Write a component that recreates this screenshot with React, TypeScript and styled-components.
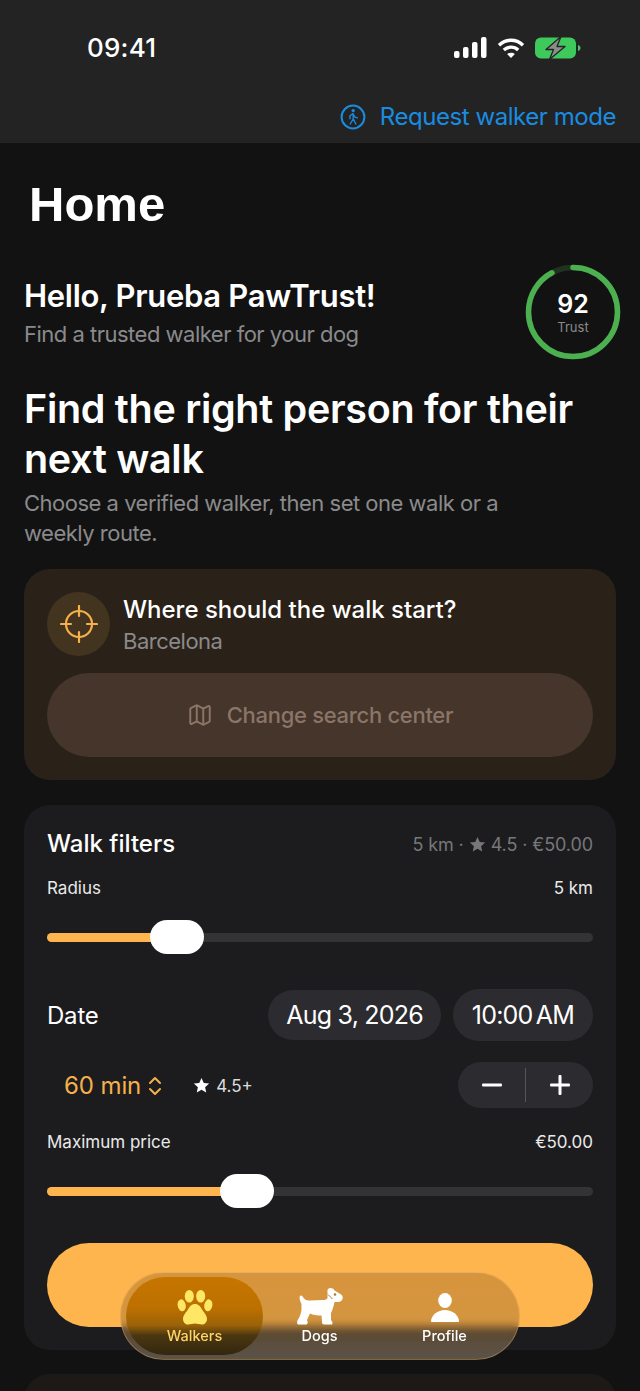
import React from 'react';
import styled, { createGlobalStyle } from 'styled-components';
import { Map as MapIcon, ChevronsUpDown } from 'lucide-react';

const GlobalStyle = createGlobalStyle`
  html, body {
    margin: 0;
    padding: 0;
    background: #121212;
  }
  * {
    box-sizing: border-box;
  }
`;

const Screen = styled.div`
  position: relative;
  width: 640px;
  height: 1391px;
  overflow: hidden;
  background: #121212;
  color: #fff;
  font-family: Inter, 'Liberation Sans', sans-serif;
`;

const TopBar = styled.header`
  height: 143px;
  background: #232323;
  padding: 32px 24px 0 87px;
`;

const StatusRow = styled.div`
  display: flex;
  align-items: center;
  justify-content: space-between;
  height: 30px;
  padding-right: 35px;
`;

const Clock = styled.span`
  font-size: 26px;
  font-weight: 500;
  letter-spacing: 0.2px;
`;

const StatusIcons = styled.div`
  display: flex;
  align-items: center;
  gap: 10px;
  padding-top: 2px;
`;

const ModeLink = styled.div`
  display: flex;
  align-items: center;
  justify-content: flex-end;
  gap: 14px;
  margin-top: 40px;
  color: #1a8ce0;
  font-size: 24px;
  letter-spacing: -0.45px;
  line-height: 30px;
  white-space: nowrap;
`;

const Content = styled.main`
  padding: 0 24px;
`;

const PageTitle = styled.h1`
  margin: 33px 0 0 5px;
  font-family: 'Liberation Sans', Arial, sans-serif;
  font-size: 49px;
  line-height: 56px;
  font-weight: 700;
`;

const GreetingRow = styled.section`
  display: flex;
  justify-content: space-between;
  margin-top: 32px;
`;

const GreetingText = styled.div`
  padding-top: 13px;
`;

const Greeting = styled.h2`
  margin: 0 0 4px;
  font-size: 31px;
  line-height: 38px;
  font-weight: 600;
  letter-spacing: -0.3px;
`;

const Muted = styled.p`
  margin: 0;
  color: #8a8a8c;
  font-size: 22px;
  letter-spacing: -0.5px;
  line-height: 30px;
`;

const Ring = styled.div`
  position: relative;
  width: 96px;
  height: 96px;
  margin-right: -5px;
`;

const RingLabel = styled.div`
  position: absolute;
  inset: 0;
  display: flex;
  flex-direction: column;
  align-items: center;
  justify-content: center;
`;

const RingValue = styled.span`
  font-size: 25px;
  line-height: 29px;
  font-weight: 600;
`;

const RingCaption = styled.span`
  color: #8a8a8c;
  font-size: 13px;
  line-height: 16px;
`;

const Headline = styled.h2`
  margin: 24px 0 0;
  font-size: 39.5px;
  line-height: 50px;
  font-weight: 600;
  letter-spacing: -0.3px;
`;

const Lead = styled(Muted)`
  width: 500px;
  margin-top: 4px;
`;

const Card = styled.section<{ $warm?: boolean }>`
  border-radius: 26px;
  padding: 23px;
  background: ${(p) => (p.$warm ? '#2a2118' : '#1c1c1e')};
`;

const LocationCard = styled(Card)`
  height: 211px;
  margin-top: 21px;
`;

const LocationRow = styled.div`
  display: flex;
  gap: 13px;
`;

const TargetBadge = styled.div`
  display: flex;
  align-items: center;
  justify-content: center;
  width: 63px;
  height: 64px;
  border-radius: 50%;
  background: #43341f;
`;

const LocationText = styled.div`
  padding-top: 3px;
`;

const CardTitle = styled.h3`
  margin: 0;
  font-size: 24px;
  line-height: 30px;
  font-weight: 500;
`;

const Place = styled(Muted)`
  margin-top: 1px;
`;

const GhostButton = styled.div`
  display: flex;
  align-items: center;
  justify-content: center;
  gap: 14px;
  height: 84px;
  margin-top: 17px;
  border-radius: 42px;
  background: #45352b;
  color: #8b7568;
  font-size: 22px;
  letter-spacing: -0.3px;
  font-weight: 500;
`;

const FilterCard = styled(Card)`
  height: 545px;
  margin-top: 25px;
`;

const SpacedRow = styled.div`
  display: flex;
  align-items: center;
  justify-content: space-between;
`;

const FilterHeader = styled(SpacedRow)`
  padding-top: 1px;
`;

const Summary = styled.span`
  display: flex;
  align-items: center;
  gap: 5px;
  color: #77777a;
  font-size: 18px;
  letter-spacing: -0.1px;
`;

const SliderLabel = styled.span`
  color: #e9e9ea;
  font-size: 17px;
  line-height: 22px;
`;

const SliderLabels = styled(SpacedRow)<{ $top: number }>`
  margin-top: ${(p) => p.$top}px;
`;

const Slider = styled.div`
  position: relative;
  height: 34px;
  margin-top: 21px;
  display: flex;
  align-items: center;
`;

const Track = styled.div`
  width: 100%;
  height: 9px;
  border-radius: 5px;
  background: #333336;
  overflow: hidden;
`;

const TrackFill = styled.div`
  height: 100%;
  background: #ffb54d;
`;

const Thumb = styled.div`
  position: absolute;
  top: 0;
  width: 54px;
  height: 34px;
  border-radius: 17px;
  background: #fff;
`;

const DateLabel = styled.span`
  font-size: 24px;
  letter-spacing: -0.2px;
`;

const DateRow = styled(SpacedRow)`
  margin-top: 35px;
`;

const Pills = styled.div`
  display: flex;
  align-items: center;
  gap: 12px;
`;

const Pill = styled.div`
  display: flex;
  align-items: center;
  justify-content: center;
  height: 50px;
  padding: 0 18px;
  border-radius: 25px;
  background: #2c2c30;
  font-size: 25px;
  letter-spacing: -0.8px;
  white-space: nowrap;
`;

const TimePill = styled(Pill)`
  height: 52px;
  padding: 0 19px;
  border-radius: 26px;
  word-spacing: -3px;
`;

const OptionsRow = styled(SpacedRow)`
  margin-top: 21px;
  height: 46px;
`;

const OptionsLeft = styled.div`
  display: flex;
  align-items: center;
  gap: 26px;
  padding-left: 17px;
  padding-top: 1px;
`;

const Duration = styled.span`
  display: flex;
  align-items: center;
  gap: 2px;
  color: #f5b04c;
  font-size: 24px;
  letter-spacing: -0.1px;
`;

const Rating = styled.span`
  display: flex;
  align-items: center;
  gap: 6px;
  color: #dcdcdd;
  font-size: 17px;
`;

const Stepper = styled.div`
  display: flex;
  align-items: center;
  width: 135px;
  height: 46px;
  border-radius: 23px;
  background: #2c2c30;
`;

const StepButton = styled.div`
  display: flex;
  flex: 1;
  align-items: center;
  justify-content: center;
`;

const StepDivider = styled.div`
  width: 1px;
  height: 34px;
  background: #55555a;
`;

const PrimaryButton = styled.div`
  height: 84px;
  margin-top: 35px;
  border-radius: 42px;
  background: #ffb54d;
`;

const NextCard = styled(Card)`
  height: 60px;
  margin-top: 24px;
  background: #1c1916;
`;

const TabBar = styled.nav`
  position: absolute;
  left: 120px;
  top: 1272px;
  display: flex;
  width: 400px;
  height: 88px;
  padding: 4px 5px;
  border-radius: 44px;
  border: 1px solid rgba(255, 205, 120, 0.3);
  background: linear-gradient(180deg, rgba(165, 110, 40, 0.45) 0%, rgba(160, 112, 50, 0.45) 60%, rgba(165, 150, 130, 0.5) 100%);
  backdrop-filter: blur(5px);
`;

const Tab = styled.div<{ $active?: boolean }>`
  display: flex;
  flex: 0 0 ${(p) => (p.$active ? 137 : 125)}px;
  flex-direction: column;
  align-items: center;
  justify-content: flex-end;
  gap: 2px;
  margin-right: ${(p) => (p.$active ? -6 : 0)}px;
  padding-bottom: 11px;
  border-radius: 40px;
  color: ${(p) => (p.$active ? '#ffd566' : '#fff')};
  font-size: 14.5px;
  font-weight: 500;
  background: ${(p) =>
    p.$active
      ? 'linear-gradient(180deg, #c67600 0%, #bd7000 40%, #9a6208 62%, #4b3610 75%, #33270f 100%)'
      : 'transparent'};
`;

const Star = ({ size, color }: { size: number; color: string }) => (
  <svg width={size} height={size} viewBox="0 0 24 24" fill={color}>
    <path d="M12 1.5l3.2 7 7.6.8-5.7 5.1 1.6 7.5L12 18.1l-6.7 3.8 1.6-7.5L1.2 9.3l7.6-.8z" />
  </svg>
);

const WalkerIcon = () => (
  <svg width="26" height="26" viewBox="0 0 26 26" fill="none" stroke="#1a8ce0">
    <circle cx="13" cy="13" r="11.4" strokeWidth="2" />
    <circle cx="13.2" cy="6.6" r="1.7" fill="#1a8ce0" stroke="none" />
    <path d="M13 9.5l-3 2.3v3M13 9.5l.3 5.5 2.6 5M13.2 15l-3 5M13.4 10.5l1.6 2.6 2.4.8" strokeWidth="1.4" strokeLinecap="round" strokeLinejoin="round" />
  </svg>
);

const Signal = () => (
  <svg width="33" height="22" viewBox="0 0 33 22" fill="#fff">
    <rect x="0" y="14" width="5.5" height="7" rx="2" />
    <rect x="9" y="10" width="5.5" height="11" rx="2" />
    <rect x="18" y="5" width="5.5" height="16" rx="2" />
    <rect x="27" y="0" width="5.5" height="21" rx="2" />
  </svg>
);

const Wifi = () => (
  <svg width="28" height="22" viewBox="0 0 28 22" fill="none" stroke="#fff" strokeWidth="3.4" strokeLinecap="butt">
    <path d="M2 8.2c7-6.6 17-6.6 24 0" />
    <path d="M6.8 13c4.2-3.8 10.2-3.8 14.4 0" />
    <path d="M14 21l-3.900-4c2.200-1.800 5.600-1.800 7.800 0z" fill="#fff" stroke="none" />
  </svg>
);

const Battery = () => (
  <svg width="46" height="24" viewBox="0 0 46 24">
    <rect x="0" y="1.500" width="41" height="21" rx="6" fill="#3ec95c" />
    <path d="M43 9c1.600.4 2.500 1.500 2.500 3s-.9 2.600-2.500 3z" fill="#3ec95c" />
    <path d="M26 0.500L11 13.500h7.500L14.500 23.500L30 10.500h-8z" fill="#8c8c8c" stroke="#232323" strokeWidth="1.300" strokeLinejoin="round" />
  </svg>
);

const TrustRing = () => (
  <svg width="96" height="96" viewBox="0 0 96 96" fill="none" strokeWidth="5.500">
    <circle cx="48" cy="48" r="44.500" stroke="#1e3320" />
    <circle
      cx="48"
      cy="48"
      r="44.500"
      stroke="#4caf50"
      strokeLinecap="round"
      strokeDasharray={`${2 * Math.PI * 44.5 * 0.92} ${2 * Math.PI * 44.5}`}
      transform="rotate(-90 48 48)"
    />
  </svg>
);

const TargetIcon = () => (
  <svg width="38" height="38" viewBox="0 0 38 38" fill="none" stroke="#f5b04c" strokeWidth="2.200" strokeLinecap="round">
    <circle cx="19" cy="19" r="13" />
    <path d="M19 1v10M19 27v10M1 19h10M27 19h10" />
  </svg>
);

const PawIcon = () => (
  <svg width="36" height="35" viewBox="0 0 36 35" fill="#ffe766">
    <ellipse cx="4.700" cy="15.300" rx="4" ry="6" transform="rotate(-10 4.700 15.300)" />
    <ellipse cx="12.300" cy="6.300" rx="4.500" ry="6.300" />
    <ellipse cx="23.700" cy="6.300" rx="4.500" ry="6.300" />
    <ellipse cx="31.300" cy="15.300" rx="4" ry="6" transform="rotate(10 31.300 15.300)" />
    <path d="M18 14C21.500 14 23.500 16.500 25 19.500C26.500 22 30 25 30 29C30 32.500 27.500 34.500 25 34.500C22.500 34.500 20.500 33.500 18 33.500C15.500 33.500 13.500 34.500 11 34.500C8.500 34.500 6 32.500 6 29C6 25 9.500 22 11 19.500C12.500 16.500 14.500 14 18 14Z" />
  </svg>
);

const DogIcon = () => (
  <svg width="46" height="37" viewBox="0 0 46 37" fill="#fff">
    <path d="M3.500 7.500C5 7 6 9 7 10.500C9 12.500 11 12.500 13 12.500L26 12C28 12 30 11.500 30.500 10L30.500 3.500C30 1.500 31.500 0 33.500 0C35.500 0 37 1 37.500 2.500L40 4L44 6.500C45.500 7.500 46 9 45.500 11C45 13 43 14 41 14L37.500 14C36.500 19 35 23 34 25L34 32C35.500 33.500 36 35 35 36.500L27 36.500C25.500 36.500 25 35.500 25 34L24.500 27.500C20 27.500 16 27 13 25.500C12 28 10.500 30 10 32.500C11 33.500 11 35.500 9.500 36.500L2 36.500C0 36.500 -.3 34.500 .5 32.500C2.500 29 4 26 4.500 22L4.500 16C3 13 1.500 9 3.500 7.500Z" />
    <circle cx="38" cy="6.500" r="1.300" fill="#a87a35" />
    <path d="M31 6.500L35.500 11" stroke="#a87a35" strokeWidth="1" fill="none" />
  </svg>
);

const PersonIcon = () => (
  <svg width="28" height="32" viewBox="0 0 28 32" fill="#fff">
    <ellipse cx="14" cy="7.500" rx="6.800" ry="7.500" />
    <path d="M1 29c-.6 0-1-.4-1-1 .5-6 6.500-11 14-11s13.500 5 14 11c0 .6-.4 1-1 1z" />
  </svg>
);

const Minus = () => (
  <svg width="22" height="4" viewBox="0 0 22 4" fill="#fff">
    <rect width="20" height="3" x="1" y="0.500" rx="1" />
  </svg>
);

const Plus = () => (
  <svg width="20" height="20" viewBox="0 0 20 20" fill="#fff">
    <rect x="0" y="8.500" width="20" height="3" rx="1" />
    <rect x="8.500" y="0" width="3" height="20" rx="1" />
  </svg>
);

export default function App() {
  return (
    <Screen>
      <GlobalStyle />
      <TopBar>
        <StatusRow>
          <Clock>09:41</Clock>
          <StatusIcons>
            <Signal />
            <Wifi />
            <Battery />
          </StatusIcons>
        </StatusRow>
        <ModeLink>
          <WalkerIcon />
          Request walker mode
        </ModeLink>
      </TopBar>
      <Content>
        <PageTitle>Home</PageTitle>
        <GreetingRow>
          <GreetingText>
            <Greeting>Hello, Prueba PawTrust!</Greeting>
            <Muted>Find a trusted walker for your dog</Muted>
          </GreetingText>
          <Ring>
            <TrustRing />
            <RingLabel>
              <RingValue>92</RingValue>
              <RingCaption>Trust</RingCaption>
            </RingLabel>
          </Ring>
        </GreetingRow>
        <Headline>
          Find the right person for their
          <br />
          next walk
        </Headline>
        <Lead>Choose a verified walker, then set one walk or a weekly route.</Lead>
        <LocationCard $warm>
          <LocationRow>
            <TargetBadge>
              <TargetIcon />
            </TargetBadge>
            <LocationText>
              <CardTitle>Where should the walk start?</CardTitle>
              <Place>Barcelona</Place>
            </LocationText>
          </LocationRow>
          <GhostButton>
            <MapIcon size={26} strokeWidth={1.8} />
            Change search center
          </GhostButton>
        </LocationCard>
        <FilterCard>
          <FilterHeader>
            <CardTitle>Walk filters</CardTitle>
            <Summary>
              5 km · <Star size={17} color="#77777a" /> 4.5 · €50.00
            </Summary>
          </FilterHeader>
          <SliderLabels $top={18}>
            <SliderLabel>Radius</SliderLabel>
            <SliderLabel>5 km</SliderLabel>
          </SliderLabels>
          <Slider>
            <Track>
              <TrackFill style={{ width: '20%' }} />
            </Track>
            <Thumb style={{ left: 103 }} />
          </Slider>
          <DateRow>
            <DateLabel>Date</DateLabel>
            <Pills>
              <Pill>Aug 3, 2026</Pill>
              <TimePill>10:00 AM</TimePill>
            </Pills>
          </DateRow>
          <OptionsRow>
            <OptionsLeft>
              <Duration>
                60 min
                <ChevronsUpDown size={24} strokeWidth={2} />
              </Duration>
              <Rating>
                <Star size={17} color="#fff" /> 4.5+
              </Rating>
            </OptionsLeft>
            <Stepper>
              <StepButton>
                <Minus />
              </StepButton>
              <StepDivider />
              <StepButton>
                <Plus />
              </StepButton>
            </Stepper>
          </OptionsRow>
          <SliderLabels $top={23}>
            <SliderLabel>Maximum price</SliderLabel>
            <SliderLabel>€50.00</SliderLabel>
          </SliderLabels>
          <Slider>
            <Track>
              <TrackFill style={{ width: '33%' }} />
            </Track>
            <Thumb style={{ left: 173 }} />
          </Slider>
          <PrimaryButton />
        </FilterCard>
        <NextCard />
      </Content>
      <TabBar>
        <Tab $active>
          <PawIcon />
          Walkers
        </Tab>
        <Tab>
          <DogIcon />
          Dogs
        </Tab>
        <Tab>
          <PersonIcon />
          Profile
        </Tab>
      </TabBar>
    </Screen>
  );
}
